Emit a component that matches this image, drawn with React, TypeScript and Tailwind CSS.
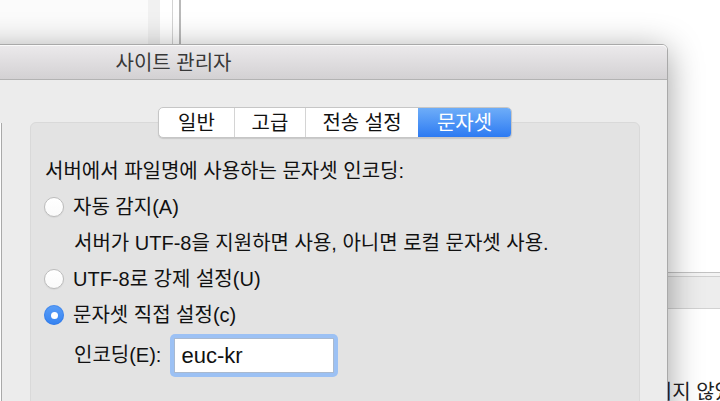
import React from "react";

function Radio({ checked }: { checked?: boolean }) {
  if (checked) {
    return (
      <span className="flex h-[20px] w-[20px] shrink-0 items-center justify-center rounded-full bg-gradient-to-b from-[#5a9ef7] to-[#3482f1] shadow-[inset_0_0_0_1px_rgba(40,110,220,0.35)]">
        <span className="h-[7px] w-[7px] rounded-full bg-white" />
      </span>
    );
  }
  return (
    <span className="h-[20px] w-[20px] shrink-0 rounded-full border border-[#bcbcbc] bg-gradient-to-b from-white to-[#fafafa] shadow-[0_1px_1px_rgba(0,0,0,0.06)]" />
  );
}

const tabs = [
  { label: "일반", w: "w-[75px]" },
  { label: "고급", w: "w-[71px]" },
  { label: "전송 설정", w: "w-[113px]" },
  { label: "문자셋", w: "w-[93px]", active: true },
];

export default function App() {
  return (
    <div className="relative h-[401px] w-[720px] overflow-hidden bg-white font-['Liberation_Sans','Noto_Sans_CJK_KR',sans-serif] text-[20px] text-[#111]">
      {/* background windows on the desktop */}
      <div className="absolute left-0 top-0 h-[44px] w-[148px] bg-[#fbfbfb]" />
      <div className="absolute left-[148px] top-0 h-[44px] w-[12px] bg-[#f1f1f1]" />
      <div className="absolute left-[172px] top-0 h-[44px] w-[1px] bg-[#d3d3d3]" />
      <div className="absolute left-[179px] top-0 h-[44px] w-[2px] bg-[#b9b9b9]" />
      <div className="absolute left-[600px] top-[272px] flex w-[140px] flex-col">
        <div className="h-[1px] bg-[#c2c2c2]" />
        <div className="h-[3px] bg-[#f3f3f3]" />
        <div className="h-[1px] bg-[#cfcfcf]" />
        <div className="h-[31px] bg-[#ededed]" />
        <div className="h-[1px] bg-[#d2d2d2]" />
      </div>
      <div className="absolute left-[617px] top-[379px] whitespace-nowrap leading-[26px] text-[#222]">
        연결되지 않았
      </div>

      {/* dialog window */}
      <div className="absolute left-[-321px] top-[44px] flex h-[420px] w-[989px] flex-col rounded-t-[6px] border border-[#a9a9a9] bg-[#ececec] shadow-[0_6px_34px_rgba(0,0,0,0.38)]">
        <div className="flex h-[35px] shrink-0 items-center justify-center rounded-t-[5px] border-b border-[#b3b3b3] bg-gradient-to-b from-[#eceaec] to-[#d3d1d3] pt-[1px] text-[20px] text-[#383838] shadow-[inset_0_1px_0_#fafafa]">
          사이트 관리자
        </div>
        <div className="flex flex-1">
          <div className="mt-[43px] w-[322px] shrink-0 border-r border-[#a9a9a9] bg-[#fdfdfd]" />
          <div className="flex flex-1 flex-col pl-[28px] pr-[27px] pt-[27px]">
            <div className="relative z-10 flex h-[31px] self-center overflow-hidden rounded-[5px] border border-[#c6c6c6] bg-white shadow-[0_1px_1px_rgba(0,0,0,0.12)]">
              {tabs.map((t, i) => (
                <div
                  key={t.label}
                  className={
                    t.active
                      ? `${t.w} flex items-center justify-center bg-gradient-to-b from-[#6eadf8] to-[#2c7af2] text-white`
                      : `${t.w} flex items-center justify-center text-[#111] ${i > 0 ? "border-l border-[#d4d4d4]" : ""}`
                  }
                >
                  {t.label}
                </div>
              ))}
            </div>
            <div className="-mt-[16px] flex h-[320px] flex-col rounded-[6px] border border-[#d9d9d9] bg-[#e3e3e3] pl-[13px] pt-[30px]">
              <div className="flex h-[36px] items-center pl-[1px]">
                서버에서 파일명에 사용하는 문자셋 인코딩:
              </div>
              <div className="flex h-[36px] items-center gap-[9px]">
                <Radio />
                <span>자동 감지(A)</span>
              </div>
              <div className="flex h-[36px] items-center pl-[30px]">
                서버가 UTF-8을 지원하면 사용, 아니면 로컬 문자셋 사용.
              </div>
              <div className="flex h-[36px] items-center gap-[9px]">
                <Radio />
                <span>UTF-8로 강제 설정(U)</span>
              </div>
              <div className="flex h-[36px] items-center gap-[9px]">
                <Radio checked />
                <span>문자셋 직접 설정(c)</span>
              </div>
              <div className="flex h-[44px] items-center gap-[9px] pl-[30px]">
                <span>인코딩(E):</span>
                <div className="flex h-[43px] w-[168px] rounded-[5px] bg-[#9cc1f4] p-[4px]">
                  <div className="flex flex-1 items-center border border-[#a9b9cf] bg-white pl-[6px] text-[22px] text-[#111]">
                    euc-kr
                  </div>
                </div>
              </div>
            </div>
          </div>
        </div>
      </div>
    </div>
  );
}
